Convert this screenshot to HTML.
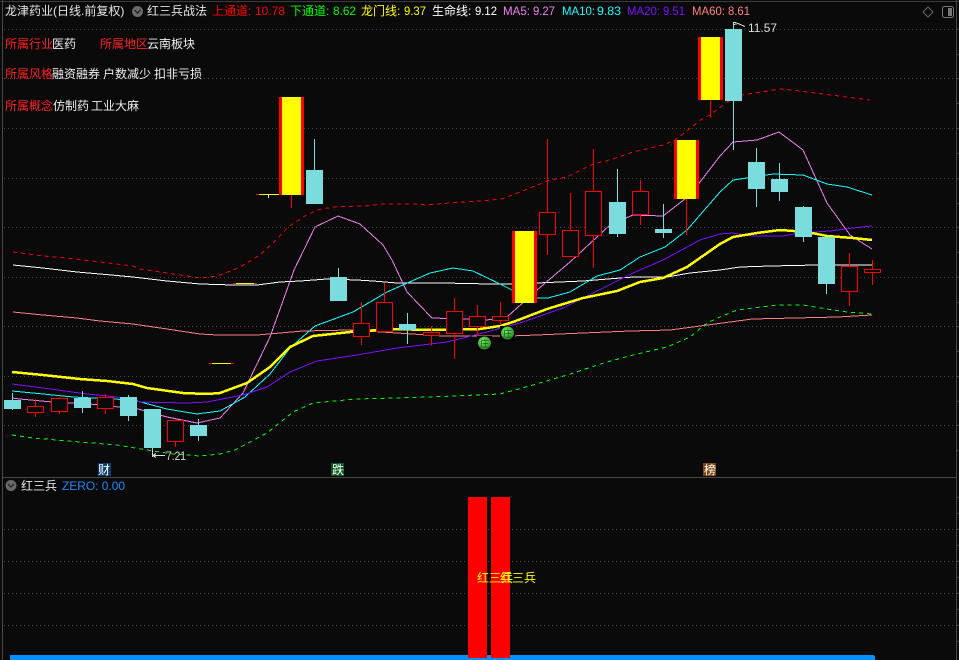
<!DOCTYPE html>
<html><head><meta charset="utf-8"><style>
html,body{margin:0;padding:0;background:#0a0a0a;width:959px;height:660px;overflow:hidden}
svg{display:block}
text{font-family:"Liberation Sans","WenQuanYi Zen Hei","Noto Sans CJK SC",sans-serif;font-size:12px}
.g{stroke:#484848;stroke-width:1;stroke-dasharray:1 3;fill:none}
.l{fill:none;stroke-width:1}
.h{fill:#0a0a0a;stroke:#f00;stroke-width:1}
.w{fill:#f00}.c{fill:#7adcdc}
</style></head><body>
<svg width="959" height="660" viewBox="0 0 959 660" xmlns="http://www.w3.org/2000/svg" shape-rendering="crispEdges">
<rect width="959" height="660" fill="#0a0a0a"/>
<!-- frame -->
<rect x="0" y="1" width="959" height="1" fill="#3c3c3c"/>
<rect x="2" y="0" width="1" height="660" fill="#484848"/>
<rect x="956" y="0" width="1" height="660" fill="#484848"/>
<rect x="3" y="477" width="953" height="1" fill="#484848"/>
<path stroke="#484848" fill="none" d="M957 29.5h2M957 54.5h2M957 78.5h2M957 103.5h2M957 128.5h2M957 153.5h2M957 178.5h2M957 203.5h2M957 227.5h2M957 252.5h2M957 277.5h2M957 302.5h2M957 326.5h2M957 351.5h2M957 376.5h2M957 401.5h2M957 425.5h2M957 450.5h2M957 497.5h2M957 513.5h2M957 529.5h2M957 545.5h2M957 561.5h2M957 577.5h2M957 593.5h2M957 609.5h2M957 625.5h2M957 641.5h2"/>
<!-- grid -->
<path class="g" d="M4 29.5H955M4 78.5H955M4 128.5H955M4 178.5H955M4 227.5H955M4 277.5H955M4 326.5H955M4 376.5H955M4 425.5H955M4 529.5H955M4 561.5H955M4 593.5H955M4 625.5H955"/>
<!-- lines -->
<polyline class="l" stroke="#fff" points="13,265 43,268 77,272 100,274 133,277 167,281 200,284 233,285 257,285 280,282 300,281 327,279 357,280 373,281 397,283 443,283 490,284 512,284 537,283 583,281 633,277 667,277 690,273 720,270 740,267 770,266 817,265 872,265"/>
<polyline class="l" stroke="#ff8080" points="13,312 43,315 77,318 100,321 133,324 167,329 200,334 217,335 257,335 280,333 303,331 350,330 397,333 443,336 510,336 537,335 583,333 630,331 670,330 700,326 730,322 752,319 838,317 872,315"/>
<polyline class="l" stroke="#f00" stroke-dasharray="4 4" points="13,252 43,256 67,258 100,262 133,266 140,269 167,273 200,278 217,276 233,270 240,267 260,255 277,239 288,227 305,216 317,210 333,207 365,206 383,204 420,204 425,205 437,204 450,203 480,201 502,199 520,192 550,180 567,177 593,164 613,159 633,152 663,145 675,140 702,119 710,115 727,102 742,95 780,89 792,90 870,100"/>
<polyline class="l" stroke="#0f0" stroke-dasharray="4 4" points="12,435 33,438 80,442 117,445 147,450 173,454 200,456 220,454 235,450 267,433 293,412 313,403 357,399 430,397 500,394 533,385 567,375 607,362 633,355 667,347 690,337 707,323 720,317 737,310 777,305 803,305 827,309 847,312 872,314"/>
<polyline class="l" stroke="#f080f0" points="12,398 20,399 63,403 80,403 138,409 167,417 197,423 220,418 243,393 270,337 294,270 315,227 338,216 360,224 383,245 392,260 407,292 432,318 463,319 487,320 507,317 537,290 570,262 610,225 633,215 663,216 690,195 720,156 733,142 757,140 779,132 803,150 827,203 850,235 872,249"/>
<polyline class="l" stroke="#1ff" points="12,391 43,394 73,397 133,400 167,409 197,414 220,411 245,397 270,374 290,348 315,326 353,312 387,292 430,273 453,268 473,271 500,284 512,290 537,298 548,298 570,292 597,276 620,270 640,257 665,247 687,230 720,192 733,180 747,178 773,174 803,175 827,184 847,187 872,195"/>
<polyline class="l" stroke="#7f0fff" points="12,384 43,388 87,394 117,397 140,402 187,403 207,402 243,395 267,387 290,372 317,361 357,355 397,348 447,342 483,333 520,323 563,308 593,293 633,273 663,260 700,240 720,234 733,233 753,236 783,236 800,233 830,231 853,228 872,226"/>
<polyline fill="none" stroke="#ff0" stroke-width="2.500" points="12,372 43,375 80,379 107,381 133,384 147,388 183,393 207,394 220,393 247,383 270,367 290,347 313,336 350,332 393,329 430,330 480,329 500,326 513,322 547,309 583,298 617,291 640,282 663,278 687,267 720,244 733,237 757,233 780,230 807,232 827,236 853,238 872,240"/>
<!-- wicks -->
<g class="c">
<rect x="12" y="393" width="1" height="17"/><rect x="82" y="391" width="1" height="22"/><rect x="128" y="395" width="1" height="26"/><rect x="152" y="448" width="1" height="7"/><rect x="198" y="419" width="1" height="22"/><rect x="314" y="139" width="1" height="31"/><rect x="338" y="268" width="1" height="9"/><rect x="407" y="313" width="1" height="31"/><rect x="617" y="169" width="1" height="68"/><rect x="663" y="204" width="1" height="34"/><rect x="733" y="22" width="1" height="128"/><rect x="756" y="148" width="1" height="59"/><rect x="779" y="163" width="1" height="38"/><rect x="803" y="206" width="1" height="36"/><rect x="826" y="284" width="1" height="10"/>
</g>
<g class="w">
<rect x="35" y="399" width="1" height="18"/><rect x="59" y="397" width="1" height="17"/><rect x="105" y="394" width="1" height="20"/><rect x="175" y="442" width="1" height="5"/><rect x="291" y="195" width="1" height="13"/><rect x="361" y="302" width="1" height="43"/><rect x="384" y="283" width="1" height="49"/><rect x="431" y="326" width="1" height="20"/><rect x="454" y="298" width="1" height="61"/><rect x="477" y="305" width="1" height="32"/><rect x="500" y="302" width="1" height="23"/><rect x="547" y="139" width="1" height="116"/><rect x="570" y="193" width="1" height="64"/><rect x="593" y="149" width="1" height="119"/><rect x="640" y="180" width="1" height="45"/><rect x="686" y="199" width="1" height="36"/><rect x="710" y="100" width="1" height="18"/><rect x="849" y="253" width="1" height="53"/><rect x="872" y="260" width="1" height="25"/>
</g>
<!-- cyan bodies -->
<g class="c">
<rect x="4" y="400" width="17" height="9"/><rect x="74" y="398" width="17" height="10"/><rect x="120" y="397" width="17" height="19"/><rect x="144" y="409" width="17" height="39"/><rect x="190" y="425" width="17" height="11"/><rect x="306" y="170" width="17" height="34"/><rect x="330" y="277" width="17" height="24"/><rect x="399" y="324" width="17" height="6"/><rect x="609" y="202" width="17" height="32"/><rect x="655" y="229" width="17" height="4"/><rect x="725" y="29" width="17" height="72"/><rect x="748" y="162" width="17" height="27"/><rect x="771" y="179" width="17" height="13"/><rect x="795" y="207" width="17" height="30"/><rect x="818" y="237" width="17" height="47"/>
</g>
<!-- hollow bodies -->
<g class="h">
<rect x="27.5" y="406.500" width="16" height="6"/><rect x="51.500" y="398.500" width="16" height="13"/><rect x="97.500" y="397.500" width="16" height="11"/><rect x="167.500" y="420.500" width="16" height="21"/><rect x="353.500" y="323.500" width="16" height="13"/><rect x="376.500" y="302.500" width="16" height="29"/><rect x="423.500" y="332.500" width="16" height="3"/><rect x="446.500" y="311.500" width="16" height="22"/><rect x="469.500" y="316.500" width="16" height="10"/><rect x="492.500" y="316.500" width="16" height="4"/><rect x="539.500" y="212.500" width="16" height="22"/><rect x="562.500" y="230.500" width="16" height="26"/><rect x="585.500" y="191.500" width="16" height="44"/><rect x="632.500" y="191.500" width="16" height="23"/><rect x="841.500" y="266.500" width="16" height="25"/><rect x="864.500" y="269.500" width="16" height="3"/>
</g>
<!-- big red/yellow -->
<rect x="279" y="97" width="25" height="98" fill="#f00"/><rect x="282" y="97" width="19" height="98" fill="#ff0"/>
<rect x="512" y="231" width="25" height="72" fill="#f00"/><rect x="515" y="231" width="19" height="72" fill="#ff0"/>
<rect x="674" y="140" width="25" height="59" fill="#f00"/><rect x="677" y="140" width="19" height="59" fill="#ff0"/>
<rect x="698" y="37" width="25" height="63" fill="#f00"/><rect x="701" y="37" width="19" height="63" fill="#ff0"/>
<!-- doji -->
<rect x="209" y="363" width="25" height="1" fill="#f00"/><rect x="212" y="363" width="19" height="1" fill="#ff0"/>
<rect x="233" y="283" width="24" height="1" fill="#f00"/><rect x="236" y="283" width="18" height="1" fill="#ff0"/>
<rect x="256" y="194" width="23" height="1" fill="#f00"/><rect x="259" y="194" width="20" height="1" fill="#ff0"/>
<rect x="268" y="195" width="1" height="3" fill="#ddd"/>
<!-- green badges -->
<g shape-rendering="auto">
<defs><radialGradient id="gb" cx="40%" cy="35%" r="70%"><stop offset="0" stop-color="#7fe86a"/><stop offset="1" stop-color="#1e8a1e"/></radialGradient></defs>
<rect x="477" y="336" width="15" height="15" fill="#000"/><circle cx="484.500" cy="343" r="6.500" fill="url(#gb)"/>
<rect x="500" y="326" width="15" height="15" fill="#000"/><circle cx="507.500" cy="333" r="6.500" fill="url(#gb)"/>
</g>
<text x="480" y="347" style="font-size:9px" fill="#0b4d0b">庄</text>
<text x="503" y="337" style="font-size:9px" fill="#0b4d0b">庄</text>
<!-- price flags -->
<path fill="none" stroke="#ddd" d="M733.500 24.500v-2h3M734 24.500l4-1 7 3"/>
<text x="748" y="32" fill="#ddd" textLength="29" lengthAdjust="spacingAndGlyphs">11.57</text>
<path fill="none" stroke="#ddd" d="M152.500 450v7M153 455.500h12M153 455.500l3-2M153 455.500l3 2"/>
<text x="166" y="460" fill="#ddd" textLength="20" lengthAdjust="spacingAndGlyphs">7.21</text>
<!-- event labels -->
<rect x="98" y="463" width="13" height="13" fill="#0b3f70"/><text x="98" y="474" fill="#fff">财</text>
<rect x="331" y="463" width="13" height="13" fill="#0c5a20"/><text x="332" y="474" fill="#fff">跌</text>
<rect x="703" y="463" width="13" height="13" fill="#7a4510"/><text x="704" y="474" fill="#fff">榜</text>
<!-- top bar -->
<text x="5" y="15" fill="#e6e6e6">龙津药业(日线.前复权)</text>
<g shape-rendering="auto"><circle cx="137.500" cy="11.500" r="5.500" fill="#6a6a6a"/><path d="M134.500 10l3 3 3-3" fill="none" stroke="#222" stroke-width="1.300"/></g>
<text x="147" y="15" fill="#e6e6e6">红三兵战法</text>
<text x="212" y="15" fill="#f00">上通道:</text><text x="255" y="15" fill="#f00" textLength="30" lengthAdjust="spacingAndGlyphs">10.78</text>
<text x="290" y="15" fill="#0f0">下通道:</text><text x="333" y="15" fill="#0f0" textLength="23" lengthAdjust="spacingAndGlyphs">8.62</text>
<text x="361" y="15" fill="#ff0">龙门线:</text><text x="404" y="15" fill="#ff0" textLength="22" lengthAdjust="spacingAndGlyphs">9.37</text>
<text x="432" y="15" fill="#fff">生命线:</text><text x="475" y="15" fill="#fff" textLength="22" lengthAdjust="spacingAndGlyphs">9.12</text>
<text x="503" y="15" fill="#f080f0" textLength="27" lengthAdjust="spacingAndGlyphs">MA5:</text><text x="533" y="15" fill="#f080f0" textLength="22" lengthAdjust="spacingAndGlyphs">9.27</text>
<text x="562" y="15" fill="#1ff" textLength="33" lengthAdjust="spacingAndGlyphs">MA10:</text><text x="597" y="15" fill="#1ff" textLength="24" lengthAdjust="spacingAndGlyphs">9.83</text>
<text x="627" y="15" fill="#7f0fff" textLength="33" lengthAdjust="spacingAndGlyphs">MA20:</text><text x="663" y="15" fill="#7f0fff" textLength="22" lengthAdjust="spacingAndGlyphs">9.51</text>
<text x="692" y="15" fill="#ff8080" textLength="33" lengthAdjust="spacingAndGlyphs">MA60:</text><text x="728" y="15" fill="#ff8080" textLength="22" lengthAdjust="spacingAndGlyphs">8.61</text>
<!-- top-right icons -->
<g shape-rendering="auto"><path d="M928 7l5 5-5 5-5-5z" fill="none" stroke="#666"/>
<rect x="942.500" y="6.500" width="11" height="11" rx="2" fill="none" stroke="#777"/><rect x="948" y="8" width="4" height="8" fill="#777"/></g>
<!-- info text -->
<text x="5" y="48" fill="#f22">所属行业</text><text x="52" y="48" fill="#eee">医药</text>
<text x="100" y="48" fill="#f22">所属地区</text><text x="147" y="48" fill="#eee">云南板块</text>
<text x="5" y="78" fill="#f22">所属风格</text><text x="52" y="78" fill="#eee">融资融券</text><text x="103" y="78" fill="#eee">户数减少</text><text x="154" y="78" fill="#eee">扣非亏损</text>
<text x="5" y="110" fill="#f22">所属概念</text><text x="53" y="110" fill="#eee">仿制药</text><text x="91" y="110" fill="#eee">工业大麻</text>
<!-- lower panel -->
<g shape-rendering="auto"><circle cx="11" cy="485.500" r="5.500" fill="#6a6a6a"/><path d="M8 484l3 3 3-3" fill="none" stroke="#222" stroke-width="1.300"/></g>
<text x="21" y="490" fill="#e6e6e6">红三兵</text>
<text x="62" y="490" fill="#1a8cff" textLength="63" lengthAdjust="spacingAndGlyphs">ZERO: 0.00</text>
<rect x="10" y="655" width="864" height="5" fill="#0090ff"/><rect x="874" y="656" width="1" height="4" fill="#0090ff"/>
<rect x="468" y="497" width="19" height="161" fill="#f00"/>
<rect x="491" y="497" width="19" height="161" fill="#f00"/>
<text x="477" y="582" fill="#ff0">红三兵</text>
<text x="500" y="582" fill="#ff0">红三兵</text>
</svg>
</body></html>
